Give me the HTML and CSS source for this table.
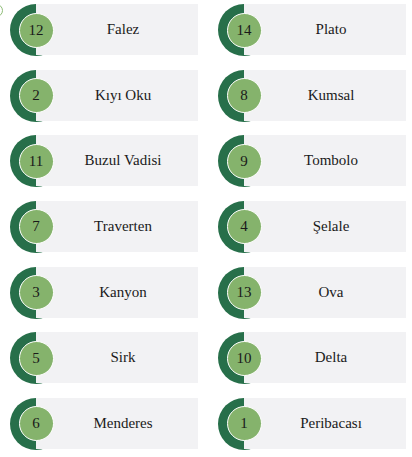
FILE: index.html
```html
<!DOCTYPE html>
<html lang="tr">
<head>
<meta charset="utf-8">
<link rel="stylesheet" href="styles.css">
</head>
<body>
<span class="corner-ring"></span>
<div class="grid">
  <div class="item"><span class="disc"></span><span class="card">Falez</span><span class="num">12</span></div>
  <div class="item"><span class="disc"></span><span class="card">Plato</span><span class="num">14</span></div>
  <div class="item"><span class="disc"></span><span class="card">Kıyı Oku</span><span class="num">2</span></div>
  <div class="item"><span class="disc"></span><span class="card">Kumsal</span><span class="num">8</span></div>
  <div class="item"><span class="disc"></span><span class="card">Buzul Vadisi</span><span class="num">11</span></div>
  <div class="item"><span class="disc"></span><span class="card">Tombolo</span><span class="num">9</span></div>
  <div class="item"><span class="disc"></span><span class="card">Traverten</span><span class="num">7</span></div>
  <div class="item"><span class="disc"></span><span class="card">Şelale</span><span class="num">4</span></div>
  <div class="item"><span class="disc"></span><span class="card">Kanyon</span><span class="num">3</span></div>
  <div class="item"><span class="disc"></span><span class="card">Ova</span><span class="num">13</span></div>
  <div class="item"><span class="disc"></span><span class="card">Sirk</span><span class="num">5</span></div>
  <div class="item"><span class="disc"></span><span class="card">Delta</span><span class="num">10</span></div>
  <div class="item"><span class="disc"></span><span class="card">Menderes</span><span class="num">6</span></div>
  <div class="item"><span class="disc"></span><span class="card">Peribacası</span><span class="num">1</span></div>
</div>
</body>
</html>
```
FILE: styles.css
```css
html, body {
  margin: 0;
  padding: 0;
  background: #ffffff;
}
body {
  position: relative;
  width: 412px;
  height: 457px;
  overflow: hidden;
  font-family: "Liberation Serif", "Times New Roman", serif;
  color: #1a1a1a;
}
.corner-ring {
  position: absolute;
  left: -10px;
  top: 4px;
  width: 11px;
  height: 11px;
  border: 1px solid #8dbb76;
  border-radius: 50%;
}
.grid {
  display: grid;
  grid-template-columns: 188px 188px;
  column-gap: 20px;
  row-gap: 13.67px;
  padding: 4px 0 0 10px;
}
.item {
  display: grid;
  grid-template-columns: 26px 26px 1fr;
  grid-template-rows: 52px;
  align-items: center;
}
.disc {
  grid-column: 1 / 3;
  grid-row: 1;
  width: 52px;
  height: 52px;
  border-radius: 50%;
  background: #276f4a;
}
.card {
  grid-column: 2 / 4;
  grid-row: 1;
  height: 51px;
  align-self: start;
  background: #f2f2f4;
  display: flex;
  align-items: center;
  justify-content: center;
  padding-left: 12px;
  font-size: 15px;
}
.num {
  grid-column: 1 / 3;
  grid-row: 1;
  justify-self: center;
  width: 33px;
  height: 33px;
  border: 1.5px solid #ffffff;
  border-radius: 50%;
  background: #85b36c;
  display: flex;
  align-items: center;
  justify-content: center;
  font-size: 15px;
  color: #1a1a1a;
}
```
